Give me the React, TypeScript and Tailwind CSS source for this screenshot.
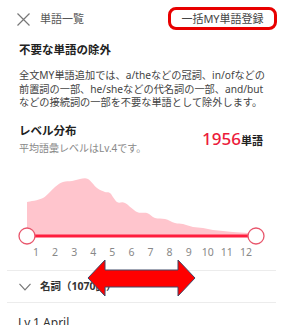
import React from "react";

const points: [number, number][] = [
  [27, 30], [43, 26], [55, 15], [63, 10], [72, 9], [80, 7], [88, 7],
  [97, 16], [105, 20], [110, 21], [117, 30], [125, 31], [137, 40],
  [147, 41], [155, 46], [165, 47], [175, 51], [183, 52], [193, 55],
  [203, 56], [213, 58], [223, 59], [233, 60], [248, 61], [256, 62],
];

function smoothPath(p: [number, number][]) {
  let d = "";
  for (let i = 0; i < p.length - 1; i++) {
    const p0 = p[i - 1] || p[i];
    const p1 = p[i];
    const p2 = p[i + 1];
    const p3 = p[i + 2] || p2;
    const c1x = p1[0] + (p2[0] - p0[0]) / 6;
    const c1y = p1[1] + (p2[1] - p0[1]) / 6;
    const c2x = p2[0] - (p3[0] - p1[0]) / 6;
    const c2y = p2[1] - (p3[1] - p1[1]) / 6;
    d += ` C${c1x},${c1y} ${c2x},${c2y} ${p2[0]},${p2[1]}`;
  }
  return d;
}

const areaPath = `M27,64 L27,30${smoothPath(points)} L256,64 Z`;
const levels = Array.from({ length: 12 }, (_, i) => i + 1);

export default function App() {
  return (
    <div className="relative h-[325px] w-[291px] overflow-hidden bg-white font-['Noto_Sans','Noto_Sans_CJK_JP',sans-serif] text-[#333]">
      <header className="flex h-[38px] items-start justify-between pl-[17px] pr-[14px] pt-[7px]">
        <div className="flex h-[23px] items-center">
          <svg width="13" height="13" viewBox="0 0 13 13" className="mt-[1px]">
            <path d="M0.5 0.5 L12.5 12.5 M12.5 0.5 L0.5 12.5" stroke="#777" strokeWidth="1.2" fill="none" />
          </svg>
          <span className="ml-[10px] text-[11px] leading-none text-[#555]">単語一覧</span>
        </div>
        <div className="flex h-[23px] w-[109px] items-center justify-center rounded-[8px] border-[3px] border-[#e80000] text-[11px] leading-none text-[#444]">
          一括MY単語登録
        </div>
      </header>

      <main className="pl-[19px] pr-[20px]">
        <h2 className="mt-[4px] text-[11.5px] font-bold leading-[16px] text-[#222]">不要な単語の除外</h2>
        <p className="mt-[11px] whitespace-nowrap text-[10.2px] leading-[13.5px] text-[#444]">
          全文MY単語追加では、a/theなどの冠詞、in/ofなどの
          <br />
          前置詞の一部、he/sheなどの代名詞の一部、and/but
          <br />
          などの接続詞の一部を不要な単語として除外します。
        </p>
        <div className="mt-[13px] flex items-center justify-between pr-[8px]">
          <div>
            <h3 className="text-[11.5px] font-bold leading-[16px] text-[#222]">レベル分布</h3>
            <p className="mt-[2px] text-[10px] leading-[14px] text-[#888]">平均語彙レベルはLv.4です。</p>
          </div>
          <div className="flex items-baseline">
            <span className="text-[17px] font-medium leading-none text-[#ec1b3b]">1956</span>
            <span className="text-[11px] font-bold leading-none text-[#222]">単語</span>
          </div>
        </div>
      </main>

      <svg width="291" height="74" viewBox="0 0 291 74" className="mt-[17px] block">
        <path d={areaPath} fill="#ffc5cd" />
        <line x1="27" y1="64" x2="256" y2="64" stroke="#ff1f3f" strokeWidth="3" />
        <circle cx="27" cy="64" r="8" fill="#fff" stroke="#e8566c" strokeWidth="1.3" />
        <circle cx="256" cy="64" r="8" fill="#fff" stroke="#e8566c" strokeWidth="1.3" />
      </svg>
      <div className="ml-[26.5px] grid w-[229px] grid-cols-12 text-center text-[10.5px] leading-[12px] text-[#888]">
        {levels.map((n) => (
          <span key={n}>{n}</span>
        ))}
      </div>

      <div className="ml-[7px] mt-[12.5px] w-[269px] border-t border-[#ececec]">
        <div className="flex h-[31px] items-center pl-[12px]">
          <svg width="12" height="8" viewBox="0 0 12 8">
            <path d="M0.5 0.8 L6 6.8 L11.5 0.8" stroke="#777" strokeWidth="1.2" fill="none" />
          </svg>
          <span className="ml-[9px] text-[10.5px] font-bold leading-none text-[#333]">名詞（1070語）</span>
        </div>
        <div className="border-t border-[#ececec] pl-[11px] pt-[13px]">
          <span className="block text-[12px] leading-[14px] text-[#333]">Lv.1 April</span>
        </div>
      </div>

      <svg width="291" height="325" viewBox="0 0 291 325" className="pointer-events-none absolute left-0 top-0">
        <polygon
          points="88,278 105,260 105,270 178,270 178,260 195,278 178,296 178,287 105,287 105,296"
          fill="#ff0000"
          stroke="#3f4866"
          strokeWidth="1"
        />
      </svg>
    </div>
  );
}
